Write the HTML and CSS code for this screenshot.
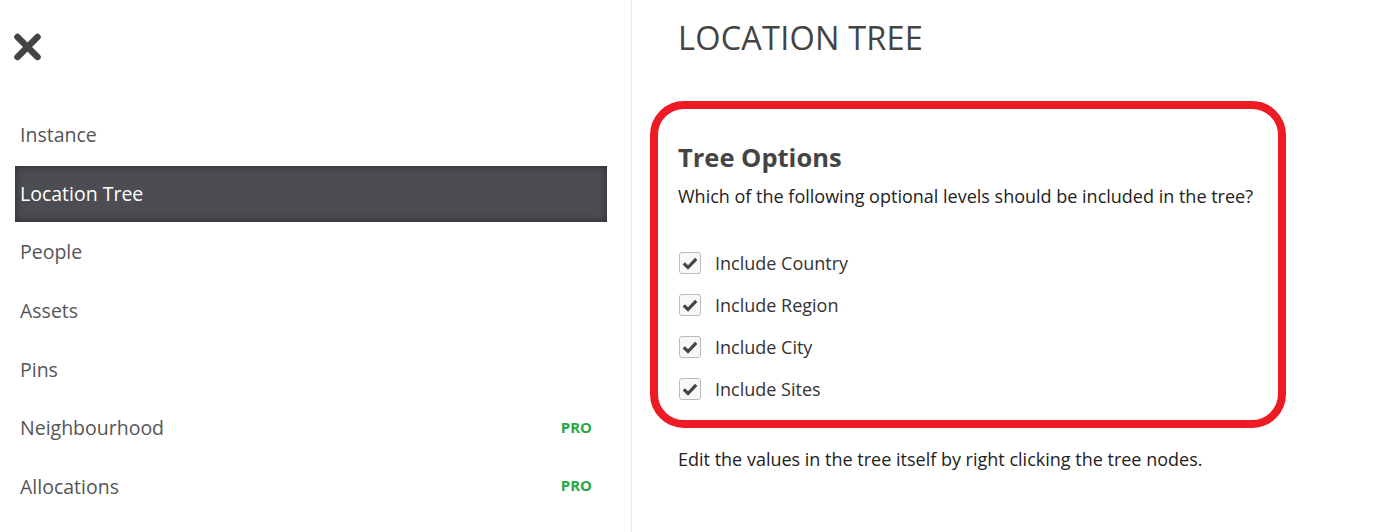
FILE: index.html
```html
<!DOCTYPE html>
<html>
<head>
<meta charset="utf-8">
<link rel="stylesheet" href="styles.css">
</head>
<body>
<div class="app">
  <aside class="sidebar">
    <div class="close">
      <svg width="30" height="30" viewBox="0 0 30 30"><path d="M5.5 5 L25.5 25 M25.5 5 L5.5 25" stroke="#444" stroke-width="6.5" stroke-linecap="round"/></svg>
    </div>
    <nav class="menu">
      <div class="item">Instance</div>
      <div class="item active">Location Tree</div>
      <div class="item">People</div>
      <div class="item">Assets</div>
      <div class="item">Pins</div>
      <div class="item">Neighbourhood<span class="pro">PRO</span></div>
      <div class="item">Allocations<span class="pro">PRO</span></div>
    </nav>
  </aside>
  <main class="content">
    <h1 class="title">LOCATION TREE</h1>
    <section class="box">
      <h2 class="box-title">Tree Options</h2>
      <p class="desc">Which of the following optional levels should be included in the tree?</p>
      <div class="checks">
        <label class="check"><span class="cb"><svg width="16" height="13" viewBox="0 0 16 13"><path d="M1.8 6.3 L6 10.5 L14.2 1.8" fill="none" stroke="#444" stroke-width="3.2"/></svg></span>Include Country</label>
        <label class="check"><span class="cb"><svg width="16" height="13" viewBox="0 0 16 13"><path d="M1.8 6.3 L6 10.5 L14.2 1.8" fill="none" stroke="#444" stroke-width="3.2"/></svg></span>Include Region</label>
        <label class="check"><span class="cb"><svg width="16" height="13" viewBox="0 0 16 13"><path d="M1.8 6.3 L6 10.5 L14.2 1.8" fill="none" stroke="#444" stroke-width="3.2"/></svg></span>Include City</label>
        <label class="check"><span class="cb"><svg width="16" height="13" viewBox="0 0 16 13"><path d="M1.8 6.3 L6 10.5 L14.2 1.8" fill="none" stroke="#444" stroke-width="3.2"/></svg></span>Include Sites</label>
      </div>
    </section>
    <p class="note">Edit the values in the tree itself by right clicking the tree nodes.</p>
  </main>
</div>
</body>
</html>
```
FILE: styles.css
```css
html, body {
  margin: 0;
  padding: 0;
  background: #fff;
}
body {
  font-family: "Open Sans", "Liberation Sans", sans-serif;
  color: #222;
}
.app {
  display: flex;
  height: 532px;
  overflow: hidden;
}
.sidebar {
  width: 632px;
  flex: none;
  border-right: 1px solid #e8e8e8;
  box-sizing: border-box;
  padding: 32px 0 0 0;
}
.close {
  padding-left: 12px;
  height: 30px;
}
.close svg { display: block; }
.menu {
  margin-top: 43px;
  padding-left: 15px;
  width: 592px;
}
.item {
  height: 58.6px;
  display: flex;
  align-items: center;
  justify-content: space-between;
  padding: 0 15px 0 5px;
  font-size: 19.5px;
  color: #555;
  box-sizing: border-box;
}
.item.active {
  background: #4c4d52;
  color: #fff;
  height: 56px;
  margin: 2px 0 1px;
  box-shadow: inset 0 0 8px rgba(0,0,0,0.45);
}
.pro {
  font-size: 15px;
  font-weight: 700;
  color: #28a745;
  margin-top: -2px;
}
.content {
  flex: 1;
  padding-left: 18px;
  background: #fff;
}
.title {
  margin: 15px 0 0 28px;
  font-size: 32.5px;
  font-weight: 400;
  color: #444;
  letter-spacing: 0.2px;
  line-height: 46px;
}
.box {
  margin-top: 40px;
  width: 636px;
  height: 327px;
  box-sizing: border-box;
  border: 8px solid #ed1c24;
  border-radius: 34px;
  padding: 31px 0 0 20px;
}
.box-title {
  margin: 0;
  font-size: 25.5px;
  font-weight: 700;
  color: #444;
  line-height: 34px;
}
.desc {
  margin: 9px 0 0 0;
  font-size: 18px;
  line-height: 26px;
  color: #222;
}
.checks {
  margin-top: 42px;
  display: flex;
  flex-direction: column;
  gap: 18px;
}
.check {
  display: flex;
  align-items: center;
  gap: 14px;
  font-size: 18px;
  color: #333;
  height: 24px;
}
.cb {
  width: 20px;
  height: 20px;
  border: 1px solid #bbb;
  border-radius: 3px;
  display: flex;
  align-items: center;
  justify-content: center;
  margin-left: 1px;
  background: #f8f8f8;
}
.note {
  margin: 18px 0 0 28px;
  font-size: 18px;
  line-height: 26px;
  color: #222;
}
```
